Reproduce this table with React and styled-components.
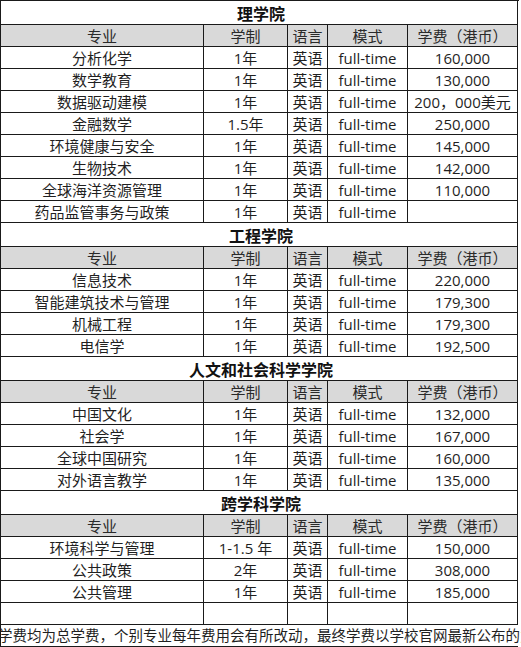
import React from "react";
import styled, { createGlobalStyle } from "styled-components";

const Global = createGlobalStyle`
  html, body { margin: 0; padding: 0; background: #fff; }
  body { overflow: hidden; }
`;

const Page = styled.div`
  width: 521px;
  height: 647px;
  overflow: hidden;
  background: #fff;
  font-family: "Open Sans", "Noto Sans CJK SC", sans-serif;
  color: #1f1f1f;
`;

const Grid = styled.div`
  display: grid;
  grid-template-columns: 203px 84px 40px 80px 110px;
  width: 518px;
  border-top: 1px solid #1a1a1a;
  border-left: 1px solid #1a1a1a;
`;

const Cell = styled.div`
  box-sizing: border-box;
  height: 22px;
  border-right: 1px solid #1a1a1a;
  border-bottom: 1px solid #1a1a1a;
  background: ${(p) => (p.$head ? "#d9d9d9" : "#ffffff")};
  display: flex;
  align-items: center;
  justify-content: center;
  white-space: nowrap;
  font-size: 15px;
  line-height: 1;
  padding-top: 1px;
  color: ${(p) => (p.$head ? "#2a2a2a" : "#1f1f1f")};
`;

const TitleCell = styled.div`
  grid-column: 1 / -1;
  box-sizing: border-box;
  height: 24px;
  border-right: 1px solid #1a1a1a;
  border-bottom: 1px solid #1a1a1a;
  display: flex;
  align-items: center;
  justify-content: center;
  font-family: "Noto Sans CJK SC", sans-serif;
  font-weight: 700;
  font-size: 16px;
  line-height: 1;
  padding-left: 4px;
  color: #111;
`;

const FooterCell = styled.div`
  grid-column: 1 / -1;
  box-sizing: border-box;
  height: 22px;
  border-bottom: 1px solid #1a1a1a;
  display: flex;
  align-items: center;
  overflow: visible;
  white-space: nowrap;
  font-family: "Noto Sans CJK SC", sans-serif;
  font-size: 14.5px;
  line-height: 1;
`;

const FooterText = styled.span`
  margin-left: -3px;
  color: #1f1f1f;
`;

const header = ["专业", "学制", "语言", "模式", "学费（港币）"];

const sections = [
  {
    title: "理学院",
    rows: [
      ["分析化学", "1年", "英语", "full-time", "160,000"],
      ["数学教育", "1年", "英语", "full-time", "130,000"],
      ["数据驱动建模", "1年", "英语", "full-time", "200，000美元"],
      ["金融数学", "1.5年", "英语", "full-time", "250,000"],
      ["环境健康与安全", "1年", "英语", "full-time", "145,000"],
      ["生物技术", "1年", "英语", "full-time", "142,000"],
      ["全球海洋资源管理", "1年", "英语", "full-time", "110,000"],
      ["药品监管事务与政策", "1年", "英语", "full-time", ""],
    ],
  },
  {
    title: "工程学院",
    rows: [
      ["信息技术", "1年", "英语", "full-time", "220,000"],
      ["智能建筑技术与管理", "1年", "英语", "full-time", "179,300"],
      ["机械工程", "1年", "英语", "full-time", "179,300"],
      ["电信学", "1年", "英语", "full-time", "192,500"],
    ],
  },
  {
    title: "人文和社会科学学院",
    rows: [
      ["中国文化", "1年", "英语", "full-time", "132,000"],
      ["社会学", "1年", "英语", "full-time", "167,000"],
      ["全球中国研究", "1年", "英语", "full-time", "160,000"],
      ["对外语言教学", "1年", "英语", "full-time", "135,000"],
    ],
  },
  {
    title: "跨学科学院",
    rows: [
      ["环境科学与管理", "1-1.5 年", "英语", "full-time", "150,000"],
      ["公共政策", "2年", "英语", "full-time", "308,000"],
      ["公共管理", "1年", "英语", "full-time", "185,000"],
      ["", "", "", "", ""],
    ],
  },
];

export default function App() {
  return (
    <Page>
      <Global />
      <Grid>
        {sections.map((s) => (
          <React.Fragment key={s.title}>
            <TitleCell>{s.title}</TitleCell>
            {header.map((h) => (
              <Cell key={s.title + h} $head>
                {h}
              </Cell>
            ))}
            {s.rows.map((r, i) =>
              r.map((c, j) => <Cell key={s.title + i + "-" + j}>{c}</Cell>)
            )}
          </React.Fragment>
        ))}
        <FooterCell>
          <FooterText>
            学费均为总学费，个别专业每年费用会有所改动，最终学费以学校官网最新公布的为准。
          </FooterText>
        </FooterCell>
      </Grid>
    </Page>
  );
}
